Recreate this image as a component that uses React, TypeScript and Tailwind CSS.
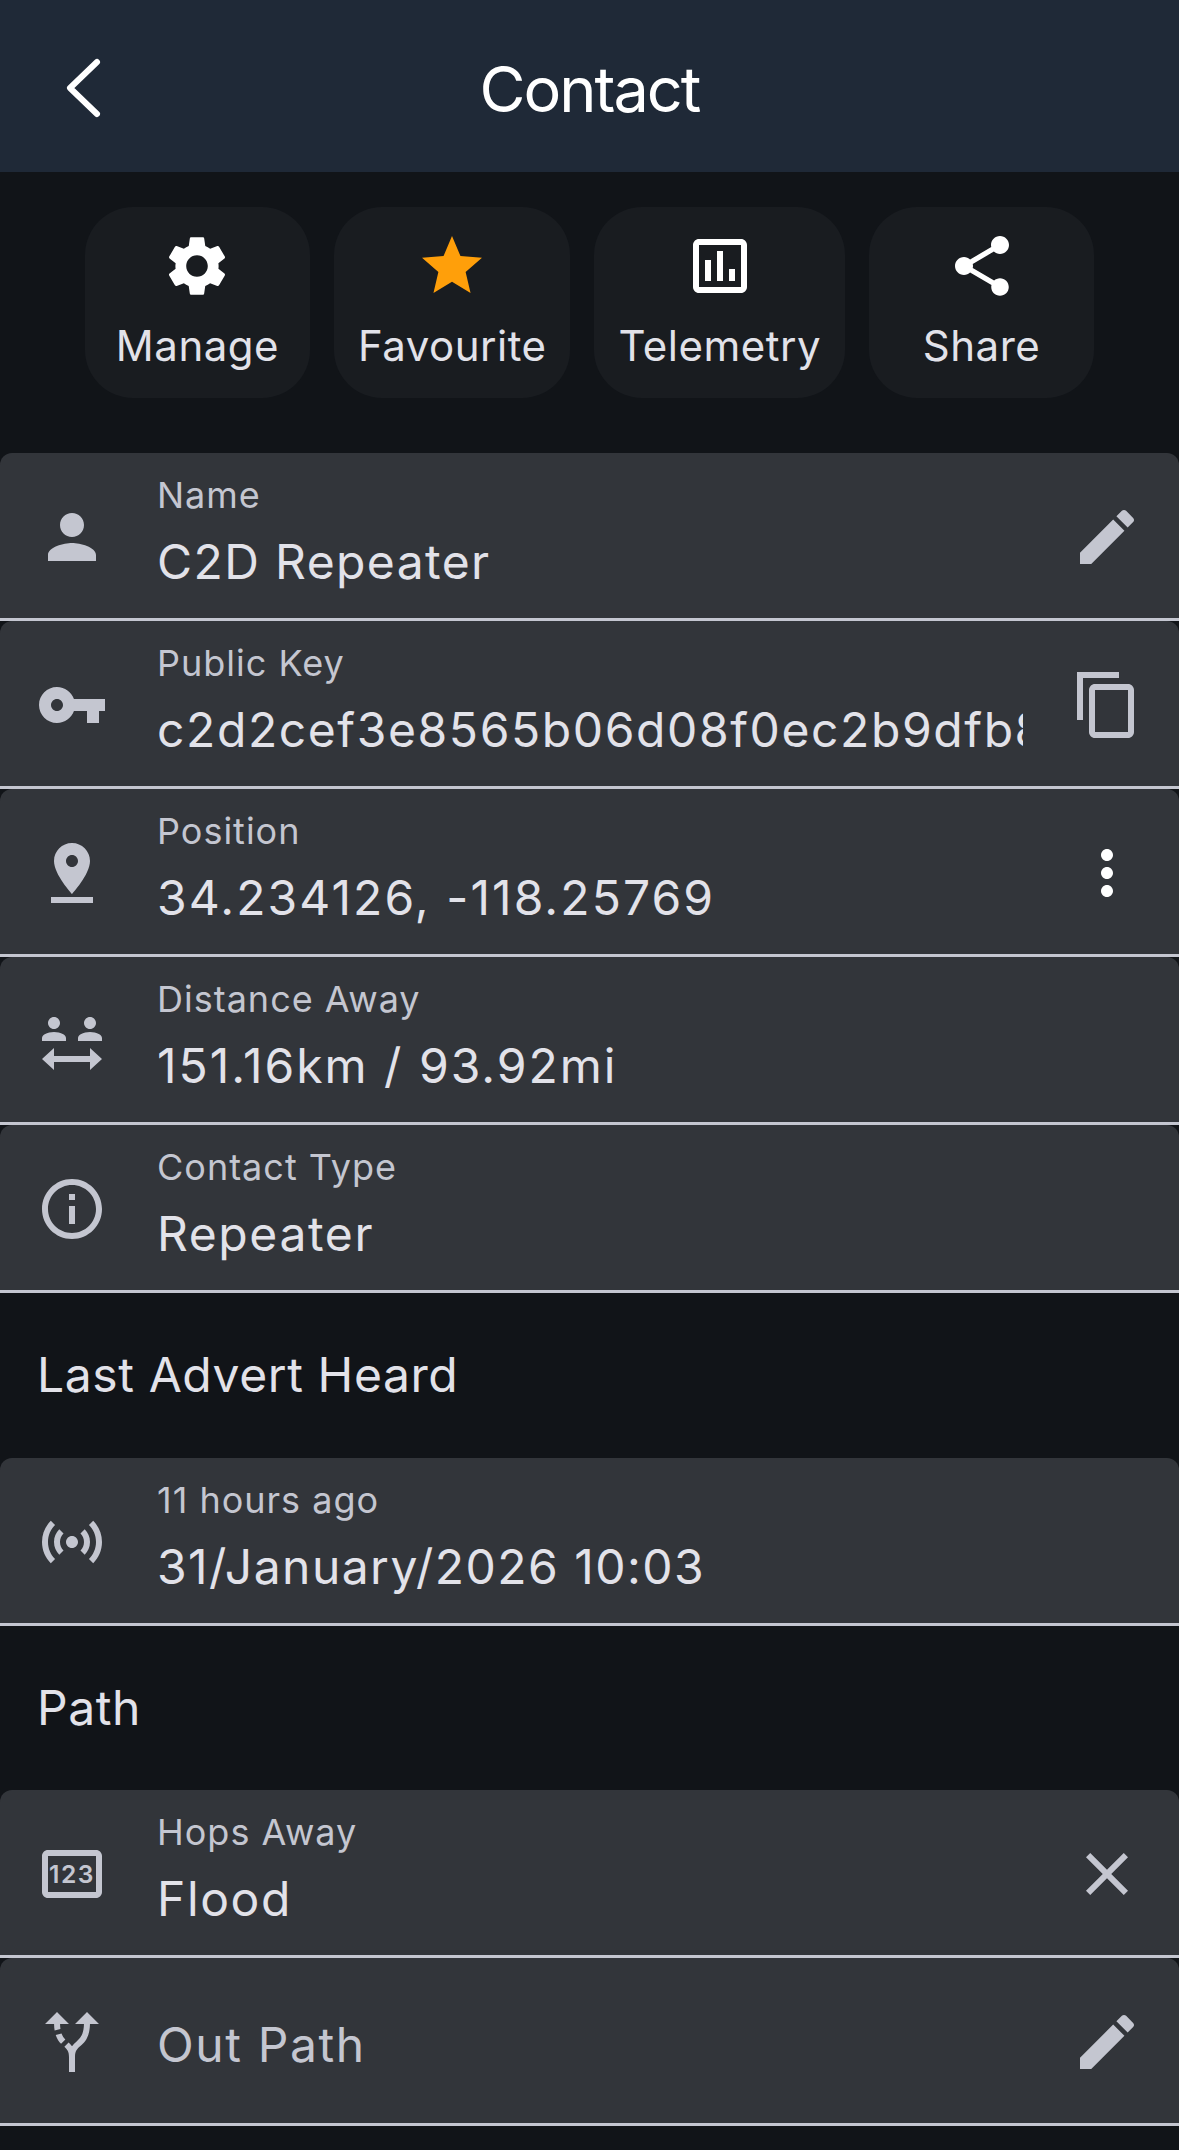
import React from 'react';

const FONT = "font-['Inter','Noto_Sans',sans-serif]";

const ICONS: Record<string, string> = {
  person: 'M12 12c2.21 0 4-1.79 4-4s-1.79-4-4-4-4 1.79-4 4 1.79 4 4 4zm0 2c-2.67 0-8 1.34-8 4v2h16v-2c0-2.66-5.33-4-8-4z',
  key: 'M12.65 10C11.83 7.67 9.61 6 7 6c-3.31 0-6 2.69-6 6s2.69 6 6 6c2.61 0 4.83-1.67 5.65-4H17v4h4v-4h2v-4H12.65zM7 14c-1.1 0-2-.9-2-2s.9-2 2-2 2 .9 2 2-.9 2-2 2z',
  pinDrop: 'M18 8c0-3.31-2.69-6-6-6S6 4.69 6 8c0 4.5 6 11 6 11s6-6.5 6-11zm-8 0c0-1.1.9-2 2-2s2 .9 2 2-.89 2-2 2c-1.1 0-2-.9-2-2zM5 20v2h14v-2H5z',
  distance: 'M6 8c1.1 0 2-.9 2-2s-.9-2-2-2-2 .9-2 2 .9 2 2 2zm12 0c1.1 0 2-.9 2-2s-.9-2-2-2-2 .9-2 2 .9 2 2 2zM2 12v-.9c0-.6.35-1.1.9-1.35C3.9 9.3 4.9 9 6 9s2.1.3 3.1.75c.55.25.9.75.9 1.35v.9H2zm12 0v-.9c0-.6.35-1.1.9-1.35C15.9 9.3 16.9 9 18 9s2.1.3 3.1.75c.55.25.9.75.9 1.35v.9h-8zM6 14.3 2 18l4 3.7V19h12v2.7l4-3.7-4-3.7V17H6v-2.7z',
  info: 'M11 7h2v2h-2zm0 4h2v6h-2zm1-9C6.48 2 2 6.48 2 12s4.48 10 10 10 10-4.48 10-10S17.52 2 12 2zm0 18c-4.41 0-8-3.59-8-8s3.59-8 8-8 8 3.59 8 8-3.59 8-8 8z',
  sensors: 'M7.76 16.24C6.67 15.16 6 13.66 6 12s.67-3.16 1.76-4.24l1.42 1.42C8.45 9.9 8 10.9 8 12c0 1.1.45 2.1 1.17 2.83l-1.41 1.41zm8.48 0C17.33 15.16 18 13.66 18 12s-.67-3.16-1.76-4.24l-1.42 1.42C15.55 9.9 16 10.9 16 12c0 1.1-.45 2.1-1.17 2.83l1.41 1.41zM12 10c-1.1 0-2 .9-2 2s.9 2 2 2 2-.9 2-2-.9-2-2-2zm8 2c0 2.21-.9 4.21-2.35 5.65l1.42 1.42C20.88 17.26 22 14.76 22 12s-1.12-5.26-2.93-7.07l-1.42 1.42C19.1 7.79 20 9.79 20 12zM6.35 6.35L4.93 4.93C3.12 6.74 2 9.24 2 12s1.12 5.26 2.93 7.07l1.42-1.42C4.9 16.21 4 14.21 4 12s.9-4.21 2.35-5.65z',
  pinBox: 'M20 4H4c-1.11 0-2 .89-2 2v12c0 1.11.89 2 2 2h16c1.11 0 2-.89 2-2V6c0-1.11-.89-2-2-2zm0 14H4V6h16v12z',
  altRoute: 'M9.78 11.16l-1.42 1.42c-.68-.69-1.34-1.58-1.79-2.94l1.94-.49c.32.89.77 1.5 1.27 2.01zM11 6L7 2 3 6h3.02c.02.81.08 1.54.19 2.17l1.94-.49C8.08 7.2 8.03 6.63 8.02 6H11zm10 0l-4-4-4 4h2.99c-.1 3.68-1.28 4.75-2.54 5.88-.5.44-1.01.92-1.45 1.55-.34-.49-.73-.88-1.13-1.24L9.46 13.6c.93.85 1.54 1.54 1.54 3.4v5h2v-5c0-2.02.71-2.66 1.79-3.63 1.38-1.24 3.08-2.78 3.2-7.37H21z',
  edit: 'M3 17.25V21h3.75L17.81 9.94l-3.75-3.75L3 17.25zM20.71 7.04c.39-.39.39-1.02 0-1.41l-2.34-2.34c-.39-.39-1.02-.39-1.41 0l-1.83 1.83 3.75 3.75 1.83-1.83z',
  copy: 'M16 1H2v16h2V3h12V1zm3 4H8c-1.1 0-2 .9-2 2v14c0 1.1.9 2 2 2h11c1.1 0 2-.9 2-2V7c0-1.1-.9-2-2-2zm0 16H8V7h11v14z',
  more: 'M12 8c1.1 0 2-.9 2-2s-.9-2-2-2-2 .9-2 2 .9 2 2 2zm0 2c-1.1 0-2 .9-2 2s.9 2 2 2 2-.9 2-2-.9-2-2-2zm0 6c-1.1 0-2 .9-2 2s.9 2 2 2 2-.9 2-2-.9-2-2-2z',
  close: 'M19 6.41L17.59 5 12 10.59 6.41 5 5 6.41 10.59 12 5 17.59 6.41 19 12 13.41 17.59 19 19 17.59 13.41 12z',
  settings: 'M19.14 12.94c.04-.3.06-.61.06-.94 0-.32-.02-.64-.07-.94l2.03-1.58c.18-.14.23-.41.12-.61l-1.92-3.32c-.12-.22-.37-.29-.59-.22l-2.39.96c-.5-.38-1.03-.7-1.62-.94l-.36-2.54c-.04-.24-.24-.41-.48-.41h-3.84c-.24 0-.43.17-.47.41l-.36 2.54c-.59.24-1.13.57-1.62.94l-2.39-.96c-.22-.08-.47 0-.59.22L2.74 8.87c-.12.21-.08.47.12.61l2.03 1.58c-.05.3-.09.63-.09.94s.02.64.07.94l-2.03 1.58c-.18.14-.23.41-.12.61l1.92 3.32c.12.22.37.29.59.22l2.39-.96c.5.38 1.03.7 1.62.94l.36 2.54c.05.24.24.41.48.41h3.84c.24 0 .44-.17.47-.41l.36-2.54c.59-.24 1.13-.56 1.62-.94l2.39.96c.22.08.47 0 .59-.22l1.92-3.32c.12-.22.07-.47-.12-.61l-2.01-1.58zM12 15.6c-1.98 0-3.6-1.62-3.6-3.6s1.62-3.6 3.6-3.6 3.6 1.62 3.6 3.6-1.62 3.6-3.6 3.6z',
  star: 'M12 17.27L18.18 21l-1.64-7.03L22 9.24l-7.19-.61L12 2 9.19 8.63 2 9.24l5.46 4.73L5.82 21z',
  chart: 'M19 3H5c-1.1 0-2 .9-2 2v14c0 1.1.9 2 2 2h14c1.1 0 2-.9 2-2V5c0-1.1-.9-2-2-2zm0 16H5V5h14v14zM7 10h2v7H7zm4-3h2v10h-2zm4 6h2v4h-2z',
  share: 'M18 16.08c-.76 0-1.44.3-1.96.77L8.91 12.7c.05-.23.09-.46.09-.7s-.04-.47-.09-.7l7.05-4.11c.54.5 1.25.81 2.04.81 1.66 0 3-1.34 3-3s-1.34-3-3-3-3 1.34-3 3c0 .24.04.47.09.7L8.04 9.81C7.5 9.31 6.79 9 6 9c-1.66 0-3 1.34-3 3s1.34 3 3 3c.79 0 1.5-.31 2.04-.81l7.12 4.16c-.05.21-.08.43-.08.65 0 1.61 1.31 2.92 2.92 2.92s2.92-1.31 2.92-2.92-1.31-2.92-2.92-2.92z',
};

const Icon = ({ name, className }: { name: string; className: string }) => (
  <svg viewBox="0 0 24 24" fill="currentColor" className={className}>
    <path d={ICONS[name]} />
    {name === 'pinBox' && (
      <text x="12" y="15.1" textAnchor="middle" fontSize="8.2" fontWeight="600" letterSpacing="0.5" fontFamily="Inter, sans-serif">
        123
      </text>
    )}
  </svg>
);

const ActionButton = ({ icon, label, iconClass }: { icon: string; label: string; iconClass: string }) => (
  <div className="flex h-[191px] min-w-[225px] flex-col items-center rounded-[48px] bg-[#191c20] px-[24px] pt-[23px]">
    <Icon name={icon} className={`h-[72px] w-[72px] ${iconClass}`} />
    <span className="mt-[20px] text-[42px] leading-[48px] tracking-[0.5px] text-[#e2e2e9]">{label}</span>
  </div>
);

interface RowProps {
  icon: string;
  label?: string;
  value: string;
  valueClass?: string;
  trailing?: string;
  trailingClass?: string;
}

const Row = ({ icon, label, value, valueClass = 'tracking-[1.6px]', trailing, trailingClass = 'text-[#c4c6d0]' }: RowProps) => (
  <div className="flex h-[168px] items-center rounded-t-[12px] border-b-[3px] border-[#c4c6d0] bg-[#32353a] pl-[36px] pr-[36px] pt-[3px]">
    <Icon name={icon} className="h-[72px] w-[72px] shrink-0 text-[#c4c6d0]" />
    <div className="ml-[49px] min-w-0 flex-1 overflow-hidden whitespace-nowrap">
      {label ? (
        <div className="pb-[8px]">
          <div className="text-[36px] leading-[48px] tracking-[1px] text-[#c4c6d0]">{label}</div>
          <div className={`mt-[10px] text-[48px] leading-[66px] text-[#e2e2e9] ${valueClass}`}>{value}</div>
        </div>
      ) : (
        <div className="pt-[5px] text-[48px] leading-[66px] tracking-[1.6px] text-[#c4c6d0]">{value}</div>
      )}
    </div>
    {trailing ? <Icon name={trailing} className={`ml-[48px] h-[72px] w-[72px] shrink-0 ${trailingClass}`} /> : null}
  </div>
);

const SectionTitle = ({ children }: { children: string }) => (
  <div className="flex h-[164.5px] items-center pl-[37px] text-[48px] tracking-[0.6px] text-[#e2e2e9]">{children}</div>
);

export default function App() {
  return (
    <div className={`min-h-screen w-[1179px] overflow-hidden bg-[#111418] ${FONT}`}>
      <header className="relative flex h-[172px] items-center justify-center bg-[#1f2937] pt-[6px]">
        <svg viewBox="0 0 40 64" className="absolute left-[62px] top-[56px] h-[64px] w-[40px]" fill="none" stroke="white" strokeWidth="6" strokeLinecap="round" strokeLinejoin="round">
          <path d="M35 6 8 32l27 26" />
        </svg>
        <h1 className="text-[63px] font-normal leading-none tracking-[-2px] text-white">Contact</h1>
      </header>

      <div className="flex justify-center gap-[24px] pb-[55px] pt-[35px]">
        <ActionButton icon="settings" label="Manage" iconClass="text-white" />
        <ActionButton icon="star" label="Favourite" iconClass="text-[#ff9f0a]" />
        <ActionButton icon="chart" label="Telemetry" iconClass="text-white" />
        <ActionButton icon="share" label="Share" iconClass="text-white" />
      </div>

      <Row icon="person" label="Name" value="C2D Repeater" valueClass="tracking-[1.4px]" trailing="edit" />
      <Row icon="key" label="Public Key" value="c2d2cef3e8565b06d08f0ec2b9dfb8a41c07e6d2" trailing="copy" />
      <Row icon="pinDrop" label="Position" value="34.234126, -118.25769" valueClass="tracking-[2.1px]" trailing="more" trailingClass="text-white" />
      <Row icon="distance" label="Distance Away" value="151.16km / 93.92mi" valueClass="tracking-[2px]" />
      <Row icon="info" label="Contact Type" value="Repeater" />

      <SectionTitle>Last Advert Heard</SectionTitle>
      <Row icon="sensors" label="11 hours ago" value="31/January/2026 10:03" valueClass="tracking-[1.45px]" />

      <SectionTitle>Path</SectionTitle>
      <Row icon="pinBox" label="Hops Away" value="Flood" trailing="close" />
      <Row icon="altRoute" value="Out Path" trailing="edit" />
    </div>
  );
}
